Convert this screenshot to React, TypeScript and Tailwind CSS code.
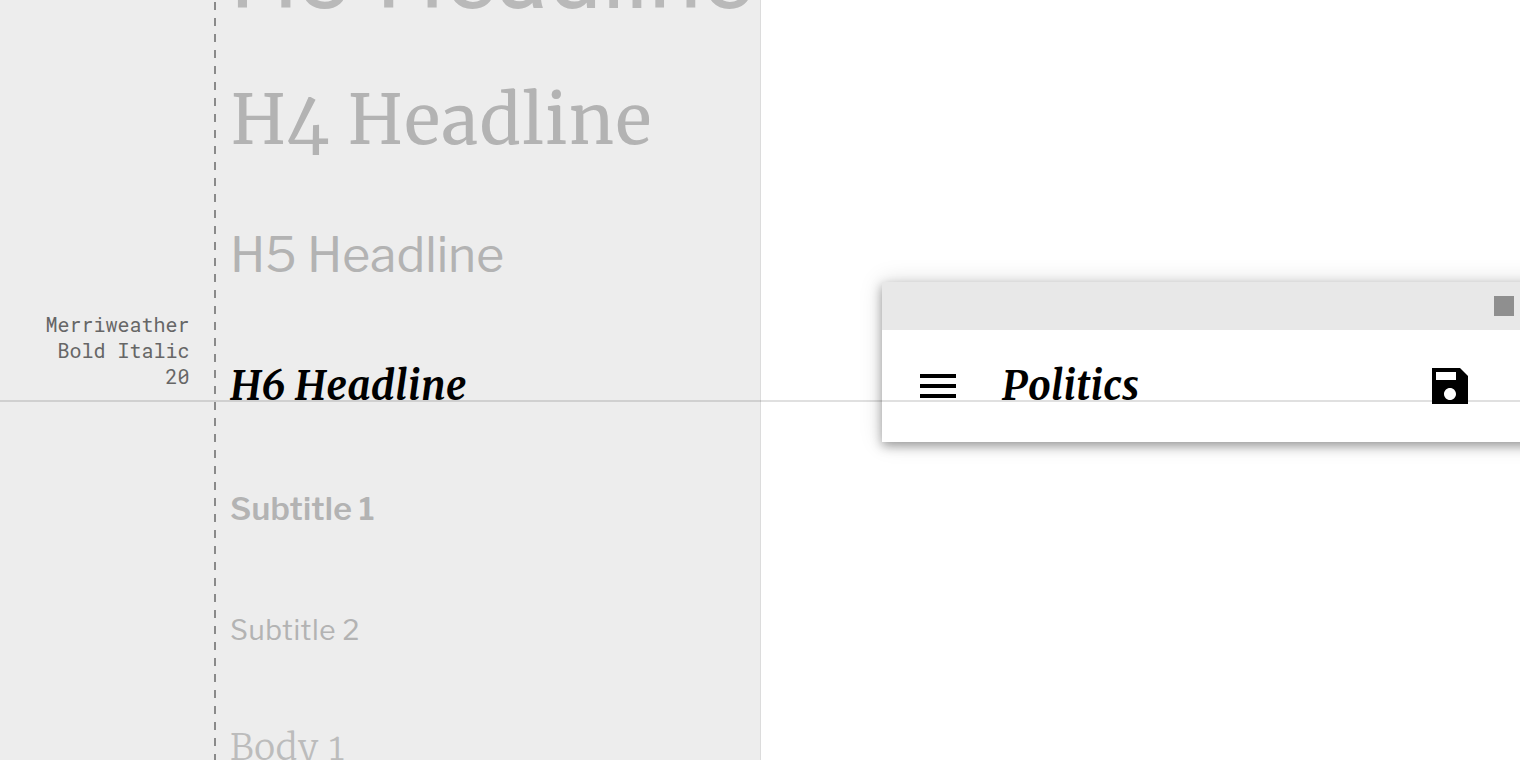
import type { ReactNode } from "react";

// Each row ends exactly on its text baseline.
function Row({ className, children }: { className: string; children: ReactNode }) {
  return (
    <div className={`w-max leading-0 whitespace-nowrap ${className}`}>
      <span className="inline-block h-full" />
      {children}
    </div>
  );
}

function TypeScale() {
  return (
    <div className="-mt-32 pl-[14px] text-[#b3b3b3] antialiased">
      <Row className="h-[136px] font-['Roboto',sans-serif] text-[96px] text-[#b9b9b9]">H3 Headline</Row>
      <Row className="h-[136px] pl-px font-['Merriweather',serif] text-[68px] tracking-[1.7px] oldstyle-nums [font-kerning:none]">
        H4 Headline
      </Row>
      <Row className="h-32 font-['Libre_Franklin',sans-serif] text-[48px]">H5 Headline</Row>
      <Row className="h-32 font-['Merriweather',serif] text-[40px] font-bold tracking-[0.4px] text-black italic [font-kerning:none]">
        H6 Headline
      </Row>
      <Row className="h-[120px] font-['Libre_Franklin',sans-serif] text-[32px] font-semibold tracking-[0.15px]">
        Subtitle 1
      </Row>
      <Row className="h-[120px] font-['Libre_Franklin',sans-serif] text-[28px] tracking-[0.5px]">Subtitle 2</Row>
      <Row className="h-[120px] font-['Merriweather',serif] text-[36px] font-light tracking-[0.8px] text-[#bcbcbc] oldstyle-nums [font-kerning:none]">
        Body 1
      </Row>
    </div>
  );
}

function AppBarPreview() {
  return (
    <div className="mt-[282px] ml-[121px] h-40 w-[720px] shrink-0 bg-white shadow-[0_4px_10px_rgba(0,0,0,0.34),0_0_22px_rgba(0,0,0,0.15)]">
      <div className="flex h-12 items-center bg-[#e8e8e8] pl-[612px]">
        <div className="size-5 bg-[#8f8f8f]" />
      </div>
      <div className="flex h-28 items-start">
        <svg className="mt-8 ml-8 size-12" viewBox="0 0 24 24">
          <path d="M3 18h18v-2H3v2zm0-5h18v-2H3v2zm0-7v2h18V6H3z" />
        </svg>
        <div className="ml-10 h-[70px] w-[424px] font-['Merriweather',serif] text-[40px] leading-0 font-bold tracking-[0.2px] italic antialiased [font-kerning:none]">
          <span className="inline-block h-full" />
          Politics
        </div>
        <svg className="mt-8 size-12" viewBox="0 0 24 24">
          <path d="M17 3H3v18h18V7l-4-4zm-5 16c-1.66 0-3-1.34-3-3s1.34-3 3-3 3 1.34 3 3-1.34 3-3 3zm3-10H5V5h10v4z" />
        </svg>
      </div>
    </div>
  );
}

export default function App() {
  return (
    <div className="relative flex h-[760px] w-[1520px] overflow-hidden bg-white">
      <div className="flex h-full w-[761px] shrink-0 border-r border-[#dcdcdc] bg-[#ededed]">
        <div className="w-[214px] shrink-0 pt-[311px] pr-[24.5px] text-right font-['Roboto_Mono',monospace] text-[20px] leading-[26px] text-[#666]">
          Merriweather
          <br />
          Bold Italic
          <br />
          20
        </div>
        <div className="w-0.5 shrink-0 bg-[repeating-linear-gradient(to_bottom,transparent_0_2px,#8a8a8a_2px_10px,transparent_10px_16px)]" />
        <TypeScale />
      </div>
      <AppBarPreview />
      <div className="absolute inset-x-0 top-[400px] h-0.5 bg-black/12" />
    </div>
  );
}
